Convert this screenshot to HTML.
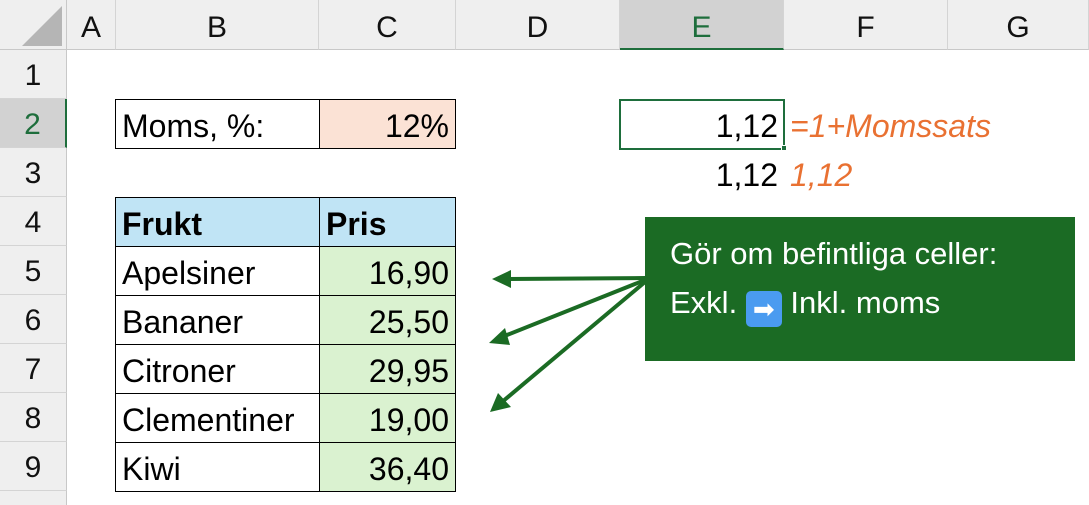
<!DOCTYPE html>
<html><head><meta charset="utf-8"><style>
html,body{margin:0;width:1089px;height:505px;overflow:hidden}
body{background:#fff;font-family:"Liberation Sans",sans-serif;position:relative}
.a{position:absolute;box-sizing:border-box}
.ch{top:0;height:50px;background:#efefef;border-right:1px solid #d4d4d4;border-bottom:1px solid #c8c8c8;font-size:30px;text-align:center;line-height:56px;color:#111}
.rh{left:0;width:67px;height:49px;background:#efefef;border-bottom:1px solid #d4d4d4;border-right:1px solid #c8c8c8;font-size:30px;text-align:center;line-height:52px;color:#111}
.c{height:50px;border:1px solid #000;font-size:32px;line-height:52px;padding:0 6px;color:#000;white-space:nowrap}
.r{text-align:right}
</style></head><body>
<div class="a" style="left:0;top:0;width:67px;height:50px;background:#efefef;border-right:1px solid #c8c8c8;border-bottom:1px solid #c8c8c8"></div>
<svg class="a" style="left:20px;top:6px" width="44" height="42"><polygon points="42,0 42,40 2,40" fill="#b5b5b5"/></svg>
<div class="a ch" style="left:67px;width:49px">A</div>
<div class="a ch" style="left:116px;width:203px">B</div>
<div class="a ch" style="left:319px;width:137px">C</div>
<div class="a ch" style="left:456px;width:164px">D</div>
<div class="a ch" style="left:620px;width:164px;background:#d2d2d2;border-bottom:2px solid #1e6e3c;color:#1e6e3c">E</div>
<div class="a ch" style="left:784px;width:164px">F</div>
<div class="a ch" style="left:948px;width:141px">G</div>
<div class="a rh" style="top:50px">1</div>
<div class="a rh" style="top:99px;background:#d2d2d2;border-right:2px solid #1e6e3c;color:#1e6e3c">2</div>
<div class="a rh" style="top:148px">3</div>
<div class="a rh" style="top:197px">4</div>
<div class="a rh" style="top:246px">5</div>
<div class="a rh" style="top:295px">6</div>
<div class="a rh" style="top:344px">7</div>
<div class="a rh" style="top:393px">8</div>
<div class="a rh" style="top:442px">9</div>
<div class="a rh" style="top:491px;height:14px;border-bottom:0"></div>

<div class="a c" style="left:115px;top:99px;width:205px">Moms, %:</div>
<div class="a c r" style="left:319px;top:99px;width:137px;background:#fbe2d5">12%</div>
<div class="a" style="left:619px;top:99px;width:166px;height:51px;border:2px solid #1e6e3c"></div>
<div class="a" style="left:781px;top:145px;width:6px;height:6px;background:#1e6e3c;border:1px solid #fff"></div>
<div class="a r" style="left:620px;top:99px;width:158px;font-size:32px;line-height:54px">1,12</div>
<div class="a" style="left:790px;top:99px;font-size:32px;line-height:54px;color:#e97132;font-style:italic">=1+Momssats</div>
<div class="a r" style="left:620px;top:148px;width:158px;font-size:32px;line-height:54px">1,12</div>
<div class="a" style="left:790px;top:148px;font-size:32px;line-height:54px;color:#e97132;font-style:italic">1,12</div>

<div class="a c" style="left:115px;top:197px;width:205px;background:#c0e4f5;font-weight:bold">Frukt</div>
<div class="a c" style="left:319px;top:197px;width:137px;background:#c0e4f5;font-weight:bold">Pris</div>
<div class="a c" style="left:115px;top:246px;width:205px">Apelsiner</div>
<div class="a c r" style="left:319px;top:246px;width:137px;background:#daf2d0">16,90</div>
<div class="a c" style="left:115px;top:295px;width:205px">Bananer</div>
<div class="a c r" style="left:319px;top:295px;width:137px;background:#daf2d0">25,50</div>
<div class="a c" style="left:115px;top:344px;width:205px">Citroner</div>
<div class="a c r" style="left:319px;top:344px;width:137px;background:#daf2d0">29,95</div>
<div class="a c" style="left:115px;top:393px;width:205px">Clementiner</div>
<div class="a c r" style="left:319px;top:393px;width:137px;background:#daf2d0">19,00</div>
<div class="a c" style="left:115px;top:442px;width:205px">Kiwi</div>
<div class="a c r" style="left:319px;top:442px;width:137px;background:#daf2d0">36,40</div>

<div class="a" style="left:645px;top:217px;width:430px;height:144px;background:#1b6b24;color:#fff;font-size:31px;padding:12px 0 0 25px;line-height:49px;white-space:nowrap;overflow:hidden">Gör om befintliga celler:<br>Exkl. <span style="display:inline-block;width:36px;height:36px;background:#4a9bf0;border-radius:5px;vertical-align:-5px;text-align:center;line-height:36px;font-size:26px">➡</span> Inkl. moms</div>
<svg class="a" style="left:0;top:0" width="1089" height="505">
<g stroke="#1b6b24" stroke-width="4" fill="none"><line x1="645" y1="278" x2="505" y2="279"/><line x1="645" y1="280" x2="502" y2="337"/><line x1="645" y1="282" x2="502" y2="402"/></g>
<g fill="#1b6b24"><polygon points="492,279 511,270 511,288"/><polygon points="489,343 505,328 510,345"/><polygon points="490,412 498,393 511,407"/></g>
</svg>
</body></html>
